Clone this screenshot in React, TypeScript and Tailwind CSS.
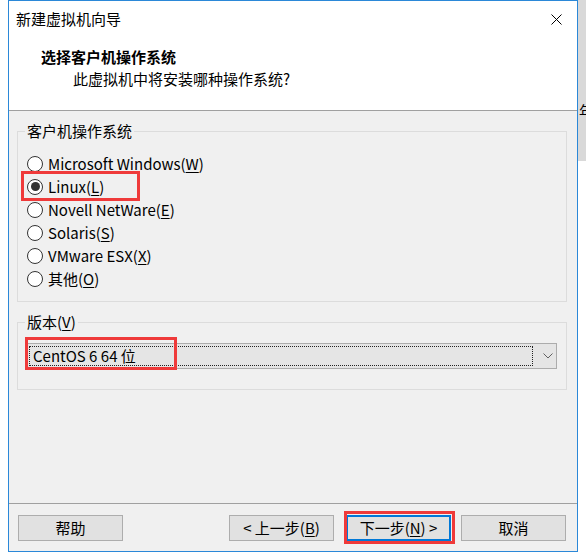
import React from "react";

const font = { fontFamily: '"Noto Sans CJK SC", "Noto Sans", sans-serif' };

function Radio({ label, mn, rest, checked }: { label: string; mn: string; rest?: string; checked?: boolean }) {
  return (
    <div className="flex items-center h-[23px]">
      <div className="w-[16px] h-[16px] rounded-full border border-[#333] bg-white flex items-center justify-center">
        {checked && <div className="w-[9px] h-[9px] rounded-full bg-[#333]" />}
      </div>
      <span className="ml-[5px] text-[15px] leading-[20px] text-black">
        {label}(<span className="underline underline-offset-2">{mn}</span>){rest}
      </span>
    </div>
  );
}

function Btn({ children, focused, className }: { children: React.ReactNode; focused?: boolean; className?: string }) {
  return (
    <div
      className={
        "w-[105px] h-[26px] flex items-center justify-center text-[15px] leading-[20px] text-black bg-[#e1e1e1] " +
        (focused ? "border-2 border-[#0078d7] " : "border border-[#adadad] ") +
        (className || "")
      }
    >
      {children}
    </div>
  );
}

export default function App() {
  return (
    <div className="w-[586px] h-[560px] bg-white flex relative overflow-hidden" style={font}>
      <div className="w-[8px]" />
      <div className="w-[570px] h-[552px] border border-[#2b88d8] flex flex-col">
        {/* header */}
        <div className="h-[109px] bg-white flex flex-col">
          <div className="h-[36px] flex items-center justify-between pl-[7px] pr-[15px]">
            <span className="text-[15px] leading-[20px] text-black">新建虚拟机向导</span>
            <svg width="11" height="11" viewBox="0 0 11 11">
              <path d="M0.5 0.5 L10.5 10.5 M10.5 0.5 L0.5 10.5" stroke="#000" strokeWidth="1" />
            </svg>
          </div>
          <div className="mt-[10px] pl-[32px] text-[15px] leading-[20px] font-bold text-black">选择客户机操作系统</div>
          <div className="mt-[2px] pl-[64px] text-[15px] leading-[20px] text-black">此虚拟机中将安装哪种操作系统?</div>
        </div>
        <div className="h-px bg-[#a0a0a0]" />
        {/* body */}
        <div className="h-[392px] bg-[#f0f0f0] px-[8px]">
          <fieldset className="mt-[10px] w-[550px] h-[181px] border border-[#dcdcdc] px-[9px] pt-[11px]">
            <legend className="ml-[-2px] px-[2px] text-[15px] leading-[20px] text-black">客户机操作系统</legend>
            <div className="flex flex-col">
              <Radio label="Microsoft Windows" mn="W" />
              <div className="relative">
                <Radio label="Linux" mn="L" checked />
                <div className="absolute left-[-6px] top-[-4px] w-[119px] h-[30px] border-[3px] border-[#ef3a3a]" />
              </div>
              <Radio label="Novell NetWare" mn="E" />
              <Radio label="Solaris" mn="S" />
              <Radio label="VMware ESX" mn="X" />
              <Radio label="其他" mn="O" />
            </div>
          </fieldset>
          <fieldset className="mt-[10px] w-[550px] h-[78px] border border-[#dcdcdc] px-[9px] pt-[11px]">
            <legend className="ml-[-2px] px-[2px] text-[15px] leading-[20px] text-black">
              版本(<span className="underline underline-offset-2">V</span>)
            </legend>
            <div className="relative w-[530px] h-[26px] bg-[#e5e5e5] border border-[#acacac] flex items-center">
              <div className="ml-[1px] w-[504px] h-[20px] border border-dotted border-[#222] flex items-center pl-[3px]">
                <span className="text-[15px] leading-[20px] text-black">CentOS 6 64 位</span>
              </div>
              <svg className="ml-[10px]" width="10" height="6" viewBox="0 0 10 6">
                <path d="M0.5 0.5 L5 5 L9.5 0.5" fill="none" stroke="#606060" strokeWidth="1" />
              </svg>
              <div className="absolute left-[-3px] top-[-7px] w-[152px] h-[33px] border-[3px] border-[#ef3a3a]" />
            </div>
          </fieldset>
        </div>
        <div className="h-px bg-[#a0a0a0]" />
        {/* footer */}
        <div className="flex-1 bg-[#f0f0f0] flex items-start pt-[11px] pl-[9px]">
          <Btn>帮助</Btn>
          <Btn className="ml-[106px]">
            &lt; 上一步(<span className="underline underline-offset-2">B</span>)
          </Btn>
          <div className="relative ml-[12px]">
            <Btn focused>
              下一步(<span className="underline underline-offset-2">N</span>) &gt;
            </Btn>
            <div className="absolute left-[-2px] top-[-4px] w-[111px] h-[33px] border-[3px] border-[#ef3a3a]" />
          </div>
          <Btn className="ml-[10px]">取消</Btn>
        </div>
      </div>
      <div className="w-[8px] h-[161px] bg-[#d9d9d9] overflow-hidden flex flex-col">
        <div className="mt-[101px] ml-[1px] text-[15px] leading-[20px] text-black whitespace-nowrap">年</div>
      </div>
    </div>
  );
}
